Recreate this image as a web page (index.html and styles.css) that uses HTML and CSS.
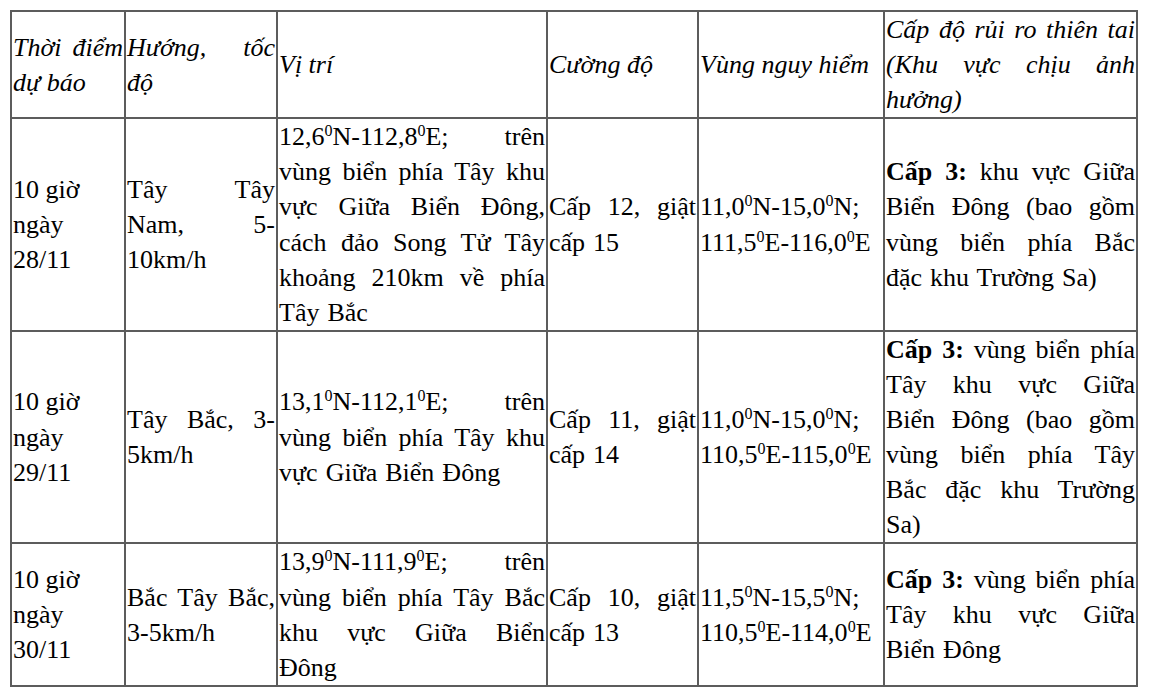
FILE: index.html
```html
<!DOCTYPE html>
<html lang="vi">
<head>
<meta charset="utf-8">
<title>Dự báo bão</title>
<link rel="stylesheet" href="styles.css">
</head>
<body>
<table class="forecast">
  <colgroup>
    <col class="c1"><col class="c2"><col class="c3"><col class="c4"><col class="c5"><col class="c6">
  </colgroup>
  <tr class="head">
    <td>Thời điểm dự báo</td>
    <td>Hướng, tốc độ</td>
    <td>Vị trí</td>
    <td>Cường độ</td>
    <td>Vùng nguy hiểm</td>
    <td>Cấp độ rủi ro thiên tai (Khu vực chịu ảnh hưởng)</td>
  </tr>
  <tr>
    <td class="time">10 giờ ngày 28/11</td>
    <td>Tây Tây Nam, 5-<wbr>10km/h</td>
    <td>12,6<sup>0</sup>N-112,8<sup>0</sup>E; trên vùng biển phía Tây khu vực Giữa Biển Đông, cách đảo Song Tử Tây khoảng 210km về phía Tây Bắc</td>
    <td>Cấp 12, giật cấp 15</td>
    <td>11,0<sup>0</sup>N-15,0<sup>0</sup>N; 111,5<sup>0</sup>E-116,0<sup>0</sup>E</td>
    <td><b>Cấp 3:</b> khu vực Giữa Biển Đông (bao gồm vùng biển phía Bắc đặc khu Trường Sa)</td>
  </tr>
  <tr>
    <td class="time">10 giờ ngày 29/11</td>
    <td>Tây Bắc, 3-<wbr>5km/h</td>
    <td>13,1<sup>0</sup>N-112,1<sup>0</sup>E; trên vùng biển phía Tây khu vực Giữa Biển Đông</td>
    <td>Cấp 11, giật cấp 14</td>
    <td>11,0<sup>0</sup>N-15,0<sup>0</sup>N; 110,5<sup>0</sup>E-115,0<sup>0</sup>E</td>
    <td><b>Cấp 3:</b> vùng biển phía Tây khu vực Giữa Biển Đông (bao gồm vùng biển phía Tây Bắc đặc khu Trường Sa)</td>
  </tr>
  <tr>
    <td class="time">10 giờ ngày 30/11</td>
    <td>Bắc Tây Bắc, 3-5km/h</td>
    <td>13,9<sup>0</sup>N-111,9<sup>0</sup>E; trên vùng biển phía Tây Bắc khu vực Giữa Biển Đông</td>
    <td>Cấp 10, giật cấp 13</td>
    <td>11,5<sup>0</sup>N-15,5<sup>0</sup>N; 110,5<sup>0</sup>E-114,0<sup>0</sup>E</td>
    <td><b>Cấp 3:</b> vùng biển phía Tây khu vực Giữa Biển Đông</td>
  </tr>
</table>
</body>
</html>
```
FILE: styles.css
```css
html, body {
  margin: 0;
  padding: 0;
  background: #fff;
}
body {
  font-family: "Liberation Serif", "Times New Roman", serif;
  font-size: 26px;
  color: #000;
}
.forecast {
  margin: 10px 0 0 10px;
  width: 1128px;
  table-layout: fixed;
  border-collapse: collapse;
}
.c1 { width: 114px; }
.c2 { width: 152px; }
.c3 { width: 270px; }
.c4 { width: 151px; }
.c5 { width: 186px; }
.c6 { width: 253px; }
.forecast td {
  border: 2px solid #5c5c5c;
  padding: 0 1px;
  vertical-align: middle;
  text-align: justify;
  line-height: 35.1px;
  word-spacing: 1.5px;
}
.head td {
  font-style: italic;
  word-spacing: 0;
}
.forecast td.time {
  text-align: left;
  word-spacing: 0;
}
sup {
  font-size: 16px;
  line-height: 0;
  vertical-align: 9px;
}
```
